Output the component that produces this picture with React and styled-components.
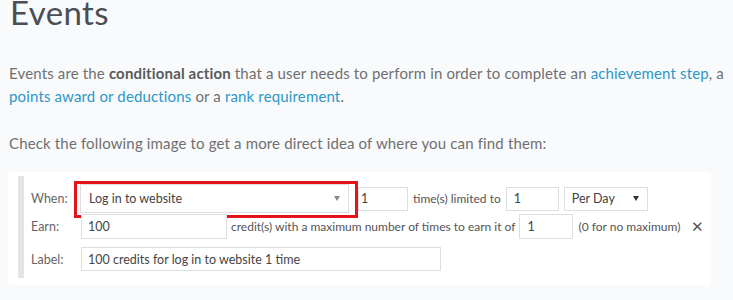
import React from "react";
import styled, { createGlobalStyle } from "styled-components";

const Global = createGlobalStyle`
  html, body { margin: 0; padding: 0; background: #f8fafc; }
  body { font-family: Lato, "Open Sans", sans-serif; }
`;

const Page = styled.div`
  padding: 0 0 0 9px;
  width: 733px;
  box-sizing: border-box;
  overflow: hidden;
`;

const Title = styled.h1`
  margin: -3px 0 0 1px;
  font-family: Lato, sans-serif;
  font-weight: 400;
  font-size: 33px;
  line-height: 30px;
  color: #4a4e55;
  letter-spacing: 0.4px;
`;

const Para = styled.p`
  margin: ${(p) => p.$top}px 0 0 0;
  font-size: 15px;
  line-height: 23px;
  color: #707070;
  letter-spacing: 0.15px;
  white-space: nowrap;
`;

const Strong = styled.b`
  font-weight: 700;
  color: #5a5a5a;
`;

const Link = styled.a`
  color: #2e97c6;
  text-decoration: none;
`;

const Panel = styled.div`
  margin: 17px 0 0 -1px;
  width: 703px;
  height: 113px;
  background: #ffffff;
  border-radius: 3px;
  box-sizing: border-box;
  padding: 4px 0 7px 10px;
  display: flex;
  font-family: Lato, "Open Sans", sans-serif;
  font-size: 12px;
  color: #555;
`;

const Dots = styled.div`
  flex: none;
  width: 6px;
  align-self: stretch;
  background-image: radial-gradient(circle, #e2e2e2 0.7px, transparent 0.8px);
  background-size: 2px 2px;
`;

const Rows = styled.div`
  flex: none;
  padding: 8px 0 0 7px;
  display: flex;
  flex-direction: column;
`;

const Row = styled.div`
  display: flex;
  align-items: center;
  height: ${(p) => p.$h}px;
  margin-top: ${(p) => p.$mt || 0}px;
`;

const Label = styled.span`
  width: 49px;
  flex: none;
  color: #666;
  font-size: 12.5px;
`;

const Box = styled.div`
  position: relative;
  flex: none;
  box-sizing: border-box;
  width: ${(p) => p.$w}px;
  height: ${(p) => p.$h || 24}px;
  margin-left: ${(p) => p.$ml || 0}px;
  border: 1px solid #dedede;
  background: #fff;
  display: flex;
  align-items: center;
  padding: 0 8px 0 ${(p) => p.$pl || 7}px;
  color: #444;
  font-size: 12.5px;
  white-space: nowrap;
`;

const Highlight = styled.span`
  position: absolute;
  left: -7px;
  top: -4px;
  right: -10px;
  bottom: -6px;
  border: 3px solid #e3141b;
  pointer-events: none;
`;

const Caret = styled.span`
  margin-left: auto;
  width: 0;
  height: 0;
  border-left: 3.5px solid transparent;
  border-right: 3.5px solid transparent;
  border-top: 5px solid ${(p) => p.$c || "#888"};
`;

const Text = styled.span`
  margin-left: ${(p) => p.$ml || 4}px;
  white-space: nowrap;
  color: #555;
`;

const Close = styled.span`
  margin-left: 11px;
  font-size: 15px;
  color: #555;
  line-height: 1;
`;

export default function App() {
  return (
    <>
      <Global />
      <Page>
        <Title>Events</Title>
        <Para $top={35}>
          Events are the <Strong>conditional action</Strong> that a user needs to perform in order to complete an{" "}
          <Link>achievement step</Link>, a
          <br />
          <Link>points award or deductions</Link> or a <Link>rank requirement</Link>.
        </Para>
        <Para $top={24}>Check the following image to get a more direct idea of where you can find them:</Para>
        <Panel>
          <Dots />
          <Rows>
            <Row $h={29}>
              <Label>When:</Label>
              <Box $w={269} $h={29} $pl={8}>
                Log in to website
                <Caret />
                <Highlight />
              </Box>
              <Box $w={50} $ml={9} $pl={2}>1</Box>
              <Text $ml={5}>time(s) limited to</Text>
              <Box $w={53} $ml={5}>1</Box>
              <Box $w={84} $ml={5}>
                Per Day
                <Caret $c="#333" />
              </Box>
            </Row>
            <Row $h={25} $mt={1}>
              <Label>Earn:</Label>
              <Box $w={146} $h={25} $ml={1} $pl={6}>100</Box>
              <Text $ml={4}>credit(s) with a maximum number of times to earn it of</Text>
              <Box $w={54} $h={25} $ml={4}>1</Box>
              <Text $ml={5}>(0 for no maximum)</Text>
              <Close>✕</Close>
            </Row>
            <Row $h={24} $mt={8}>
              <Label>Label:</Label>
              <Box $w={360} $ml={1} $pl={6}>100 credits for log in to website 1 time</Box>
            </Row>
          </Rows>
        </Panel>
      </Page>
    </>
  );
}
